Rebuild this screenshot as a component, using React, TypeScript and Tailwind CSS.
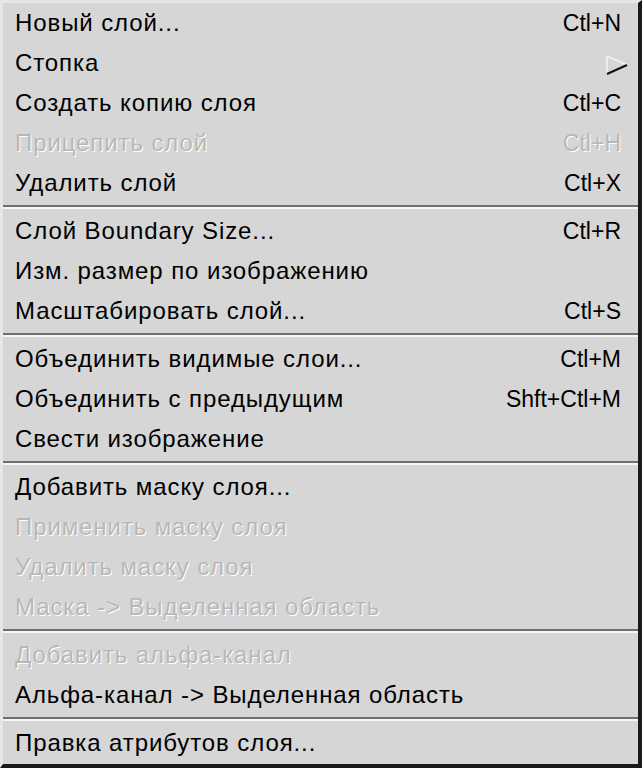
type Item = { label: string; shortcut?: string; disabled?: boolean; submenu?: boolean };

const sections: Item[][] = [
  [
    { label: "Новый слой...", shortcut: "Ctl+N" },
    { label: "Стопка", submenu: true },
    { label: "Создать копию слоя", shortcut: "Ctl+C" },
    { label: "Прицепить слой", shortcut: "Ctl+H", disabled: true },
    { label: "Удалить слой", shortcut: "Ctl+X" },
  ],
  [
    { label: "Слой Boundary Size...", shortcut: "Ctl+R" },
    { label: "Изм. размер по изображению" },
    { label: "Масштабировать слой...", shortcut: "Ctl+S" },
  ],
  [
    { label: "Объединить видимые слои...", shortcut: "Ctl+M" },
    { label: "Объединить с предыдущим", shortcut: "Shft+Ctl+M" },
    { label: "Свести изображение" },
  ],
  [
    { label: "Добавить маску слоя..." },
    { label: "Применить маску слоя", disabled: true },
    { label: "Удалить маску слоя", disabled: true },
    { label: "Маска -> Выделенная область", disabled: true },
  ],
  [
    { label: "Добавить альфа-канал", disabled: true },
    { label: "Альфа-канал -> Выделенная область" },
  ],
  [{ label: "Правка атрибутов слоя..." }],
];

function SubmenuArrow() {
  return (
    <svg width="22" height="20" viewBox="0 0 22 20">
      <path d="M1 1 L1 19" stroke="#f4f4f4" strokeWidth="1.5" />
      <path d="M1 1 L21 10" stroke="#f4f4f4" strokeWidth="1.5" />
      <path d="M1 19 L21 10" stroke="#111" strokeWidth="2" />
    </svg>
  );
}

function Row({ item }: { item: Item }) {
  const tone = item.disabled
    ? "text-[#b8b8b8] [text-shadow:1px_1px_0_#ffffff]"
    : "text-black";
  return (
    <div className={`flex h-10 items-center justify-between pl-[12px] pr-[17px] ${tone}`}>
      <span className="text-[24px] tracking-[0.9px]">{item.label}</span>
      {item.shortcut && <span className="text-[23px]">{item.shortcut}</span>}
      {item.submenu && (
        <span className="-mr-[7px] mt-[4px]">
          <SubmenuArrow />
        </span>
      )}
    </div>
  );
}

export default function App() {
  return (
    <div className="h-[768px] w-[642px] bg-[#d6d6d6] font-['Liberation_Sans',Arial,sans-serif] leading-none">
      <div className="flex h-full flex-col border-t-[3px] border-l-[3px] border-r-[4px] border-b-[4px] border-t-[#e6e6e6] border-l-[#e6e6e6] border-r-[#1a1a1a] border-b-[#1a1a1a]">
        {sections.map((sec, i) => (
          <div key={i}>
            {i > 0 && (
              <div className="flex h-2 flex-col justify-center">
                <div className="h-[2px] bg-[#6e6e6e]" />
                <div className="h-[2px] bg-[#f6f6f6]" />
              </div>
            )}
            {sec.map((item) => (
              <Row key={item.label} item={item} />
            ))}
          </div>
        ))}
      </div>
    </div>
  );
}
